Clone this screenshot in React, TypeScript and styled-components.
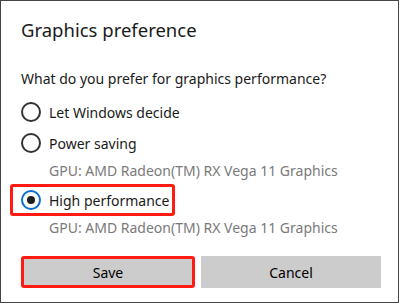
import React, { useState } from 'react';
import styled, { createGlobalStyle } from 'styled-components';

const GlobalStyle = createGlobalStyle`
  html, body {
    margin: 0;
    padding: 0;
    background: #ffffff;
  }
  body {
    font-family: "Noto Sans", "Open Sans", sans-serif;
    color: #000000;
  }
`;

type Option = {
  id: string;
  label: string;
  gpu?: string;
  highlight?: boolean;
};

const options: Option[] = [
  { id: 'auto', label: 'Let Windows decide' },
  { id: 'power', label: 'Power saving', gpu: 'GPU: AMD Radeon(TM) RX Vega 11 Graphics' },
  { id: 'high', label: 'High performance', gpu: 'GPU: AMD Radeon(TM) RX Vega 11 Graphics', highlight: true },
];

const App: React.FC = () => {
  const [selected, setSelected] = useState('high');

  return (
    <>
      <GlobalStyle />
      <Dialog>
        <Title>Graphics preference</Title>
        <Question>What do you prefer for graphics performance?</Question>
        <Options>
          {options.map((opt) => (
            <OptionBlock key={opt.id}>
              <RadioRow $highlight={opt.highlight} onClick={() => setSelected(opt.id)}>
                <Radio $checked={selected === opt.id} />
                <RadioLabel>{opt.label}</RadioLabel>
              </RadioRow>
              {opt.gpu && <Gpu>{opt.gpu}</Gpu>}
            </OptionBlock>
          ))}
        </Options>
        <Actions>
          <Button $highlight>Save</Button>
          <Button>Cancel</Button>
        </Actions>
      </Dialog>
    </>
  );
};

export default App;

const Dialog = styled.div`
  box-sizing: border-box;
  width: 399px;
  height: 303px;
  border: 1px solid #454545;
  padding: 0 17px 0 20px;
  display: flex;
  flex-direction: column;
`;

const Title = styled.div`
  font-size: 18.5px;
  line-height: 28px;
  margin-top: 15px;
  color: #1a1a1a;
`;

const Question = styled.div`
  font-size: 14px;
  line-height: 20px;
  margin-top: 25px;
  color: #1a1a1a;
`;

const Options = styled.div`
  display: flex;
  flex-direction: column;
  margin-top: 9px;
`;

const OptionBlock = styled.div`
  display: flex;
  flex-direction: column;
  margin-bottom: 3px;
`;

const RadioRow = styled.div<{ $highlight?: boolean }>`
  position: relative;
  display: flex;
  align-items: center;
  gap: 8px;
  height: 28px;
  cursor: pointer;

  ${({ $highlight }) =>
    $highlight &&
    `
    &::after {
      content: '';
      position: absolute;
      left: -11px;
      top: -2px;
      width: 165px;
      height: 32px;
      box-sizing: border-box;
      border: 3px solid #ff1a12;
      border-radius: 3px;
      pointer-events: none;
    }
  `}
`;

const Radio = styled.span<{ $checked?: boolean }>`
  box-sizing: border-box;
  width: 20px;
  height: 20px;
  border-radius: 50%;
  border: 2px solid ${({ $checked }) => ($checked ? '#0a6ed1' : '#333333')};
  display: flex;
  align-items: center;
  justify-content: center;
  flex-shrink: 0;

  &::after {
    content: '';
    width: 8px;
    height: 8px;
    border-radius: 50%;
    background: #1f1f1f;
    display: ${({ $checked }) => ($checked ? 'block' : 'none')};
  }
`;

const RadioLabel = styled.span`
  font-size: 14px;
  color: #1a1a1a;
`;

const Gpu = styled.div`
  font-size: 14px;
  line-height: 20px;
  color: #7a7a7a;
  padding-left: 28px;
  margin-top: 4px;
  margin-bottom: 2px;
`;

const Actions = styled.div`
  display: grid;
  grid-template-columns: 174px 180px;
  column-gap: 6px;
  margin-top: 13px;
`;

const Button = styled.button<{ $highlight?: boolean }>`
  box-sizing: border-box;
  height: 32px;
  background: #cccccc;
  border: ${({ $highlight }) => ($highlight ? '3px solid #ff1a12' : 'none')};
  border-radius: ${({ $highlight }) => ($highlight ? '3px' : '0')};
  font-family: "Noto Sans", "Open Sans", sans-serif;
  font-size: 14px;
  color: #000000;
  padding: 0;
  cursor: pointer;
`;
